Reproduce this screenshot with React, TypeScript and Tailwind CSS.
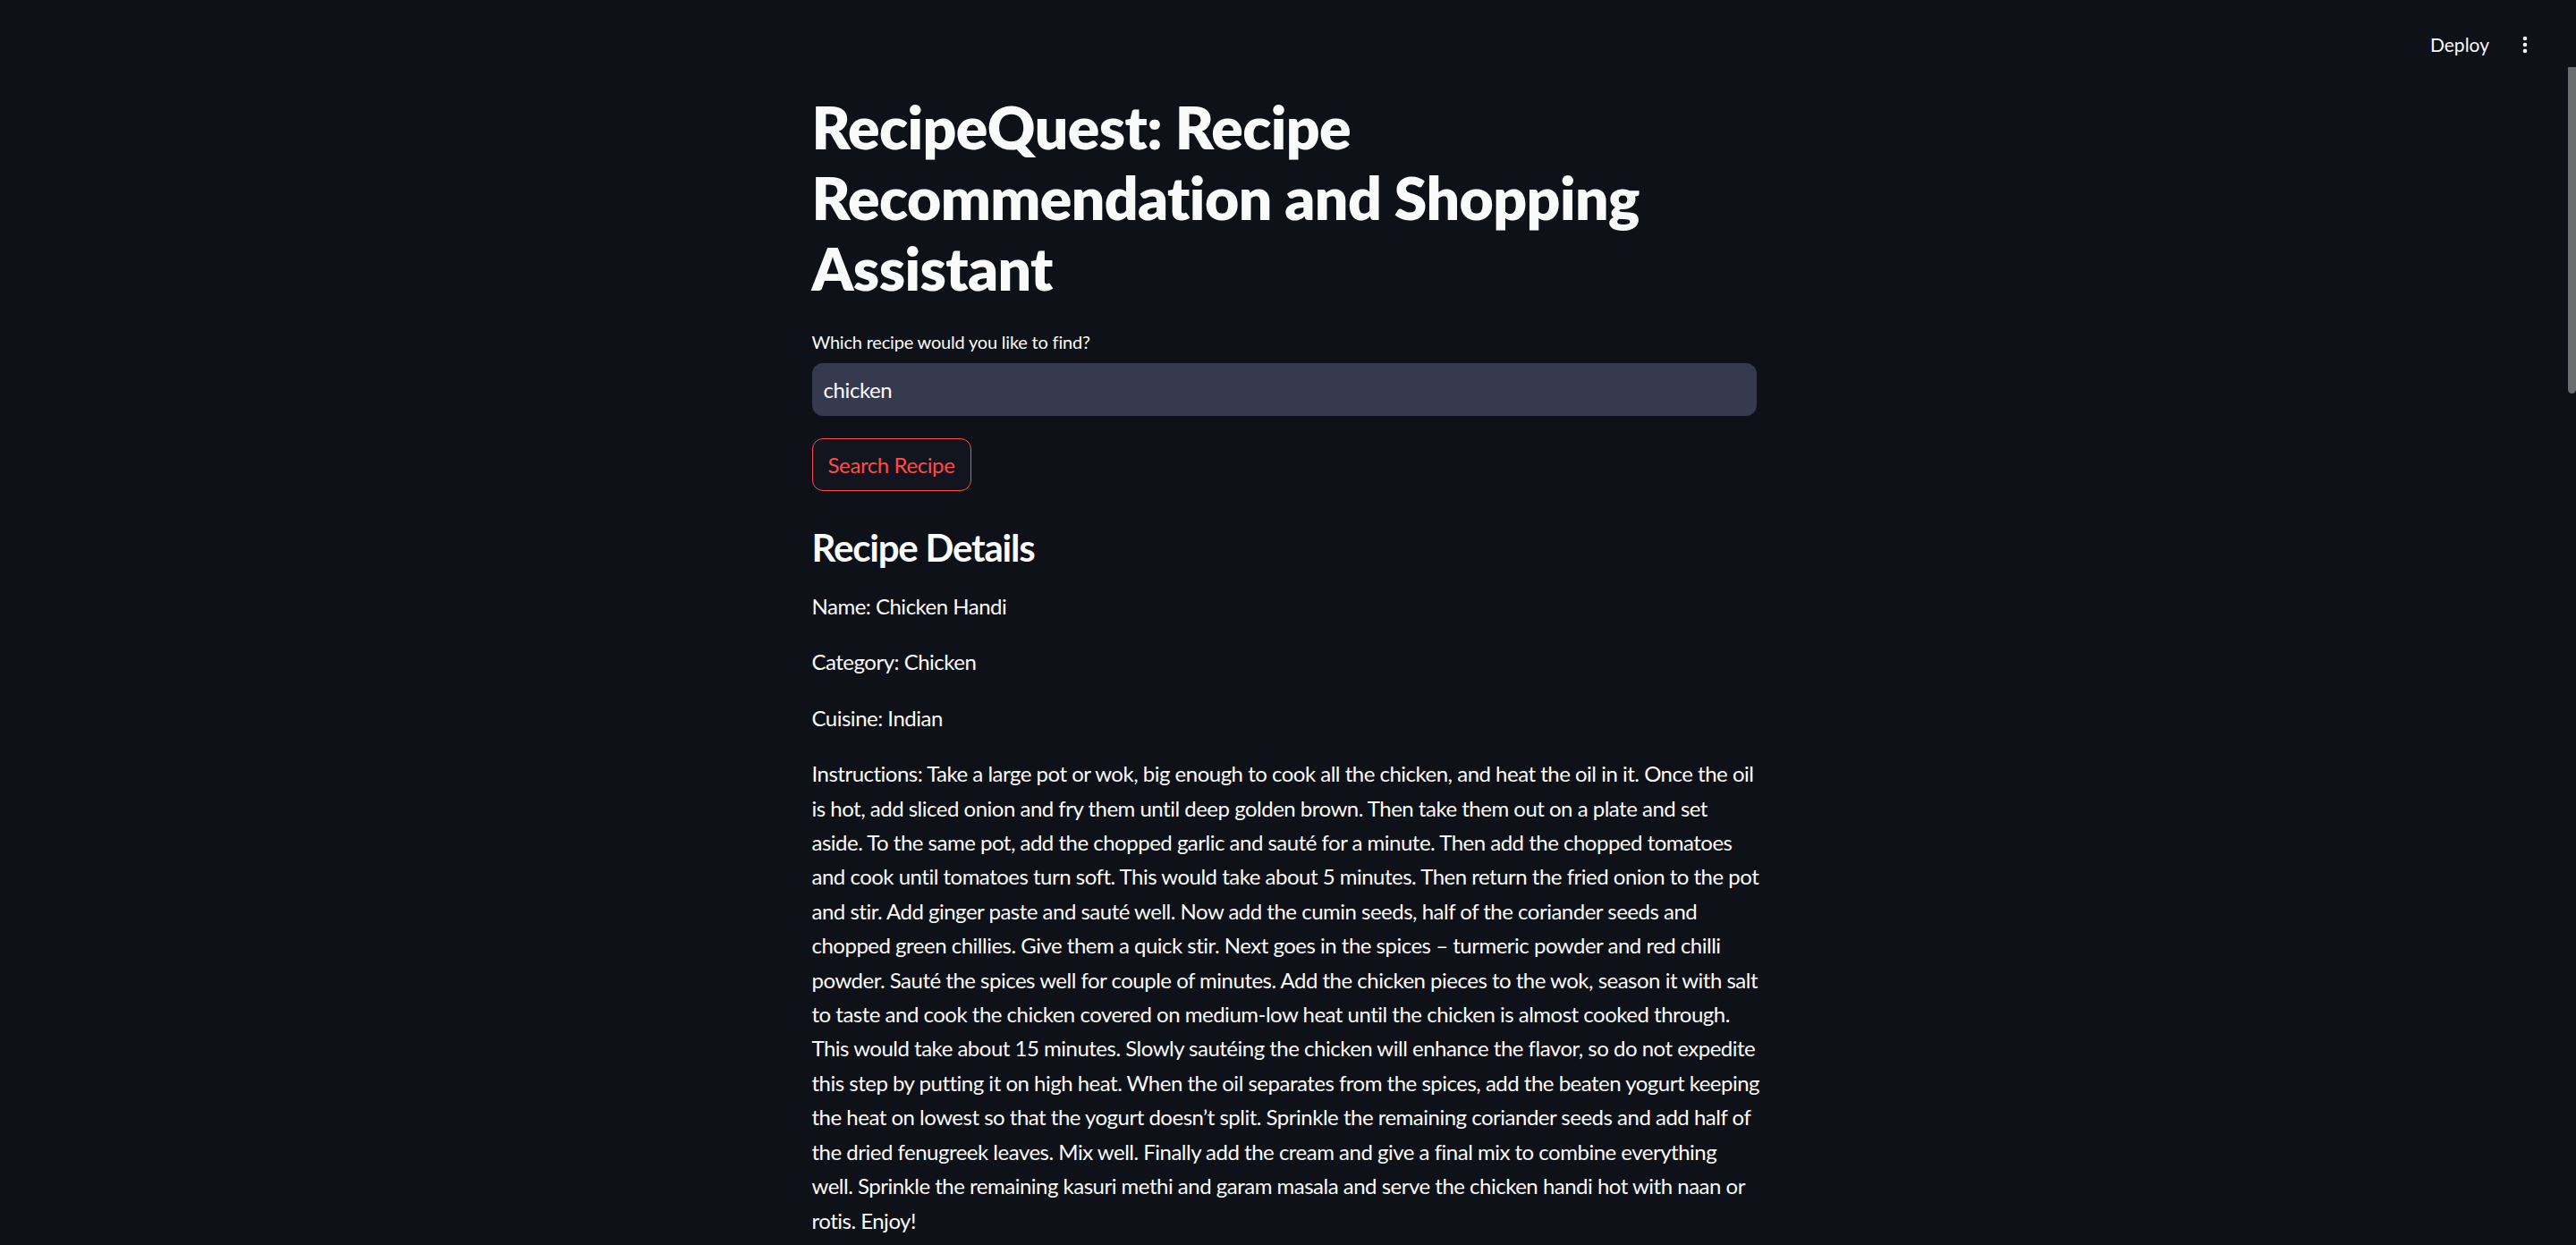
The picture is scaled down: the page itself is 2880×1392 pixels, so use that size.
import React from 'react';
import { EllipsisVertical } from 'lucide-react';

const font = { fontFamily: 'Lato, "Noto Sans", sans-serif' };

const titleLines = ['RecipeQuest: Recipe', 'Recommendation and Shopping', 'Assistant'];

// wrapped the same way the screenshot wraps it
const instructionLines = [
    'Instructions: Take a large pot or wok, big enough to cook all the chicken, and heat the oil in it. Once the oil',
    'is hot, add sliced onion and fry them until deep golden brown. Then take them out on a plate and set',
    'aside. To the same pot, add the chopped garlic and sauté for a minute. Then add the chopped tomatoes',
    'and cook until tomatoes turn soft. This would take about 5 minutes. Then return the fried onion to the pot',
    'and stir. Add ginger paste and sauté well. Now add the cumin seeds, half of the coriander seeds and',
    'chopped green chillies. Give them a quick stir. Next goes in the spices – turmeric powder and red chilli',
    'powder. Sauté the spices well for couple of minutes. Add the chicken pieces to the wok, season it with salt',
    'to taste and cook the chicken covered on medium-low heat until the chicken is almost cooked through.',
    'This would take about 15 minutes. Slowly sautéing the chicken will enhance the flavor, so do not expedite',
    'this step by putting it on high heat. When the oil separates from the spices, add the beaten yogurt keeping',
    'the heat on lowest so that the yogurt doesn’t split. Sprinkle the remaining coriander seeds and add half of',
    'the dried fenugreek leaves. Mix well. Finally add the cream and give a final mix to combine everything',
    'well. Sprinkle the remaining kasuri methi and garam masala and serve the chicken handi hot with naan or',
    'rotis. Enjoy!',
];

export default function App() {
    return (
        <div className="relative min-h-screen w-full bg-[#0e1117] text-[#fafafa] overflow-hidden" style={font}>
            {/* top bar */}
            <div className="absolute top-[38px] right-[45px] flex items-center gap-[28px]">
                <span className="text-[21px] leading-[24px]">Deploy</span>
                <EllipsisVertical size={24} strokeWidth={2.6} className="text-white" />
            </div>

            {/* scrollbar thumb */}
            <div className="absolute right-0 top-[75px] w-[9px] h-[365px] bg-[#6b6c70] rounded-b-[5px]" />

            <div className="flex justify-center pr-[9px] pt-[102px] pb-[40px]">
                <div className="w-[1056px] flex flex-col">
                    <h1 className="text-[66px] leading-[79px] font-extrabold tracking-[-0.6px]">
                        {titleLines.map((l) => (
                            <div key={l} className="whitespace-nowrap">{l}</div>
                        ))}
                    </h1>

                    <label className="mt-[26px] text-[20px] leading-[34px] tracking-[-0.2px]">
                        Which recipe would you like to find?
                    </label>
                    <div className="mt-[7px] h-[59px] rounded-[12px] bg-[#363a4e] flex items-center px-[13px]">
                        <span className="text-[24px] tracking-[-0.4px]">chicken</span>
                    </div>

                    <div className="mt-[25px]">
                        <button className="h-[59px] w-[178px] rounded-[12px] border border-[#ff4b4b] bg-[#12151d] text-[#ff4b4b] text-[24px] tracking-[-0.4px]" style={font}>
                            Search Recipe
                        </button>
                    </div>

                    <h3 className="mt-[38px] text-[42px] leading-[50px] font-bold tracking-[-1.2px]">Recipe Details</h3>

                    <div className="mt-[22px] text-[24px] leading-[38.4px] tracking-[-0.5px] flex flex-col gap-[24px]">
                        <p>Name: Chicken Handi</p>
                        <p>Category: Chicken</p>
                        <p>Cuisine: Indian</p>
                        <p>
                            {instructionLines.map((l, i) => (
                                <span key={i} className="block whitespace-nowrap">{l}</span>
                            ))}
                        </p>
                    </div>
                </div>
            </div>
        </div>
    );
}
